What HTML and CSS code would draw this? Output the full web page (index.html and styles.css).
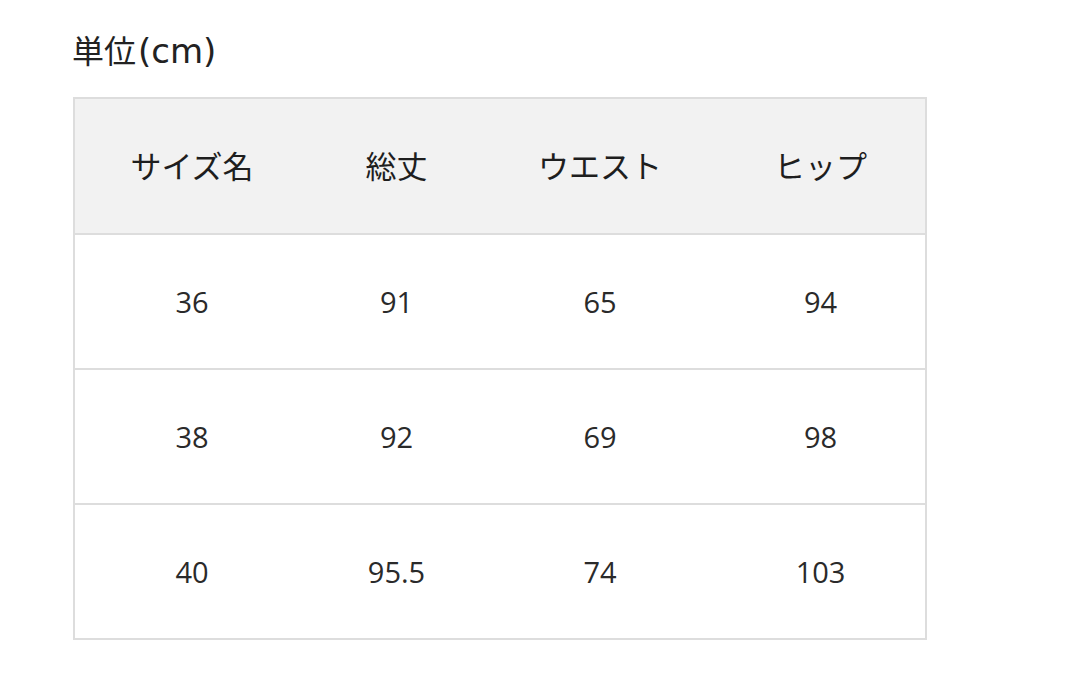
FILE: index.html
```html
<!DOCTYPE html>
<html lang="ja">
<head>
<meta charset="utf-8">
<link rel="stylesheet" href="styles.css">
</head>
<body>
<div class="page">
  <h2 class="unit">単位<span class="latin">(cm)</span></h2>
  <table class="size-table">
    <colgroup>
      <col class="c1"><col class="c2"><col class="c3"><col class="c4">
    </colgroup>
    <thead>
      <tr><th>サイズ名</th><th>総丈</th><th>ウエスト</th><th>ヒップ</th></tr>
    </thead>
    <tbody>
      <tr><td>36</td><td>91</td><td>65</td><td>94</td></tr>
      <tr><td>38</td><td>92</td><td>69</td><td>98</td></tr>
      <tr><td>40</td><td>95.5</td><td>74</td><td>103</td></tr>
    </tbody>
  </table>
</div>
</body>
</html>
```
FILE: styles.css
```css
html, body {
  margin: 0;
  padding: 0;
  background: #ffffff;
}
.page {
  padding: 27px 0 0 72px;
  font-family: "Open Sans", "Noto Sans CJK JP", sans-serif;
  color: #222222;
}
.unit {
  margin: 0 0 25px 0;
  font-family: "Noto Sans CJK JP", sans-serif;
  font-weight: 400;
  font-size: 32px;
  line-height: 44px;
  height: 45px;
}
.unit .latin {
  font-family: "DejaVu Sans", sans-serif;
  font-size: 34px;
  margin-left: 2px;
}
.size-table {
  border-collapse: collapse;
  table-layout: fixed;
  width: 852px;
  margin-left: 1px;
  border: 2px solid #dddddd;
}
.c1 { width: 235px; }
.c2 { width: 175px; }
.c3 { width: 232px; }
.c4 { width: 210px; }
.size-table th,
.size-table td {
  text-align: center;
  vertical-align: middle;
  padding: 0;
  height: 133px;
  border-top: 2px solid #dddddd;
  font-weight: 400;
}
.size-table th {
  background: #f2f2f2;
  font-family: "Noto Sans CJK JP", sans-serif;
  font-size: 31px;
  height: 130px;
  padding-bottom: 4px;
  color: #1e1e1e;
}
.size-table td {
  font-family: "Open Sans", sans-serif;
  font-size: 29px;
  color: #2a2a2a;
}
```
